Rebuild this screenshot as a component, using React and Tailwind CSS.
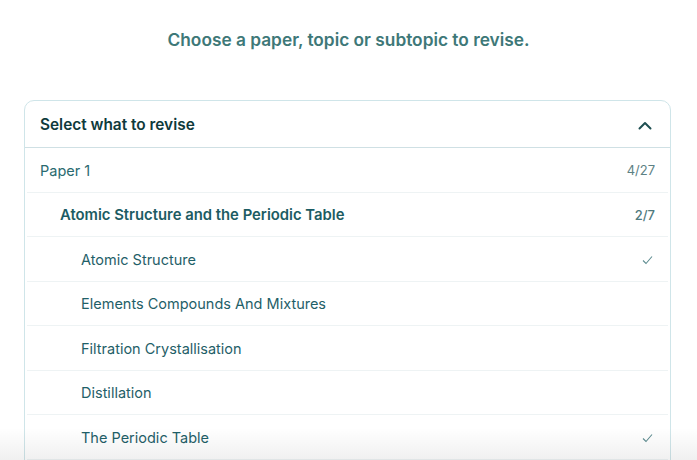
import { useState } from "react";

const subtopics = [
  { name: "Atomic Structure", done: true },
  { name: "Elements Compounds And Mixtures", done: false },
  { name: "Filtration Crystallisation", done: false },
  { name: "Distillation", done: false },
  { name: "The Periodic Table", done: true },
];

function Check() {
  return (
    <svg width="11" height="10" viewBox="0 0 11 10" fill="none">
      <path d="M1 5.5 L4 8.5 L10 1.5" stroke="#5f8d91" strokeWidth="1.1" />
    </svg>
  );
}

function App() {
  const [open, setOpen] = useState(true);

  return (
    <div
      className="relative h-[460px] bg-white overflow-hidden"
      style={{ fontFamily: "Inter, 'Noto Sans', sans-serif" }}
    >
      <h1 className="pt-[29px] text-center text-[17.3px] leading-[22px] font-semibold text-[#3e7878]">
        Choose a paper, topic or subtopic to revise.
      </h1>

      <div className="mt-[49px] ml-6 w-[647px] rounded-[10px] border border-[#cfe5e9] bg-white">
        <button
          type="button"
          onClick={() => setOpen(!open)}
          className="flex h-[47px] w-full items-center justify-between border-b border-[#cfe0e4] pl-[15px] pr-[18px] pt-[2px]"
        >
          <span className="text-[15.4px] font-semibold text-[#0f3a3b]">
            Select what to revise
          </span>
          <svg width="14" height="9" viewBox="0 0 14 9" fill="none">
            <path
              d="M1.5 7.5 L7 2 L12.5 7.5"
              stroke="#1f4f52"
              strokeWidth="2"
              strokeLinecap="round"
              strokeLinejoin="round"
            />
          </svg>
        </button>

        {open && (
          <div className="px-[2px]">
            <div className="flex h-[44.5px] items-center justify-between border-b border-[#eef3f4] pl-[13px] pr-[13px] pt-[2px]">
              <span className="text-[14.5px] text-[#2a6a70]">Paper 1</span>
              <span className="text-[13px] text-[#5d8184]">4/27</span>
            </div>
            <div className="flex h-[44.5px] items-center justify-between border-b border-[#eef3f4] pl-[33px] pr-[13px] pt-[2px]">
              <span className="text-[14.85px] font-semibold text-[#1c5c63]">
                Atomic Structure and the Periodic Table
              </span>
              <span className="text-[13px] font-medium text-[#4f7a7e]">2/7</span>
            </div>
            {subtopics.map((s) => (
              <div
                key={s.name}
                className="flex h-[44.5px] items-center justify-between border-b border-[#eef3f4] pl-[54px] pr-[15px] pt-[2px]"
              >
                <span className="text-[14.5px] text-[#1f6068]">{s.name}</span>
                {s.done && <Check />}
              </div>
            ))}
            {/* next row continues below the fold */}
            <div className="h-[44.5px]" />
          </div>
        )}
      </div>

      <div className="pointer-events-none absolute bottom-0 left-0 right-0 h-8 bg-gradient-to-b from-transparent to-black/[0.06]" />
    </div>
  );
}

export default App;
